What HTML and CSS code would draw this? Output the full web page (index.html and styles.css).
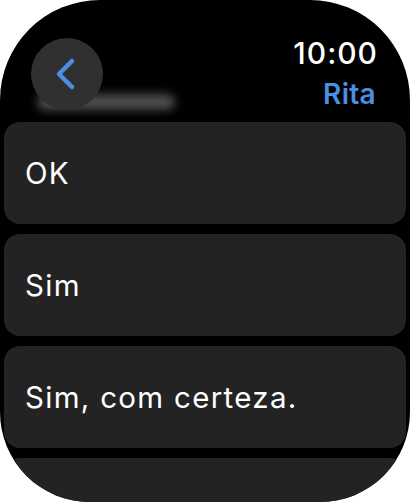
FILE: index.html
```html
<!DOCTYPE html>
<html>
  <head>
    <title>Respostas</title>
    <link rel="stylesheet" href="styles.css">
  </head>
  <body>
    <div class="screen">
      <div class="header">
        <div class="ghost"></div>
        <div class="back">
          <svg width="72" height="72" viewBox="0 0 72 72">
            <path d="M41 23 L28 36 L41 49" fill="none" stroke="#4a8fe2" stroke-width="4.5" stroke-linecap="round" stroke-linejoin="round"/>
          </svg>
        </div>
        <div class="status">
          <div class="time">10:00</div>
          <div class="contact">Rita</div>
        </div>
      </div>
      <div class="replies">
        <div class="reply">OK</div>
        <div class="reply">Sim</div>
        <div class="reply">Sim, com certeza.</div>
        <div class="reply"></div>
      </div>
    </div>
  </body>
</html>
```

FILE: styles.css
```css
html, body {
    margin: 0;
    background: #ffffff;
  }
  .screen {
    width: 410px;
    height: 502px;
    box-sizing: border-box;
    padding: 0 4px;
    background: #000000;
    border-radius: 100px 100px 90px 90px;
    overflow: hidden;
    font-family: "Inter", "Noto Sans", sans-serif;
    color: #ffffff;
  }
  .header {
    position: relative;
    height: 122px;
    display: flex;
    justify-content: space-between;
    align-items: flex-start;
  }
  .ghost {
    position: absolute;
    left: 33px;
    top: 94px;
    width: 138px;
    height: 16px;
    border-radius: 8px;
    background: rgba(130, 130, 130, 0.6);
    filter: blur(5px);
  }
  .back {
    position: relative;
    margin: 38px 0 0 27px;
    width: 72px;
    height: 72px;
    border-radius: 50%;
    background: #303030;
  }
  .back svg {
    display: block;
  }
  .status {
    margin: 35px 29px 0 0;
    text-align: right;
  }
  .time {
    font-size: 30px;
    line-height: 36px;
    font-weight: 500;
    letter-spacing: 1px;
    margin-right: -1px;
  }
  .contact {
    margin-top: 6px;
    font-size: 28px;
    line-height: 34px;
    font-weight: 600;
    letter-spacing: 0.3px;
    margin-right: 1px;
    color: #4a8fe2;
  }
  .replies {
    display: flex;
    flex-direction: column;
    gap: 10px;
  }
  .reply {
    height: 102px;
    flex-shrink: 0;
    box-sizing: border-box;
    padding: 0 21px;
    display: flex;
    align-items: center;
    background: #232323;
    border-radius: 16px;
    font-size: 29.5px;
    letter-spacing: 1.3px;
  }
```
